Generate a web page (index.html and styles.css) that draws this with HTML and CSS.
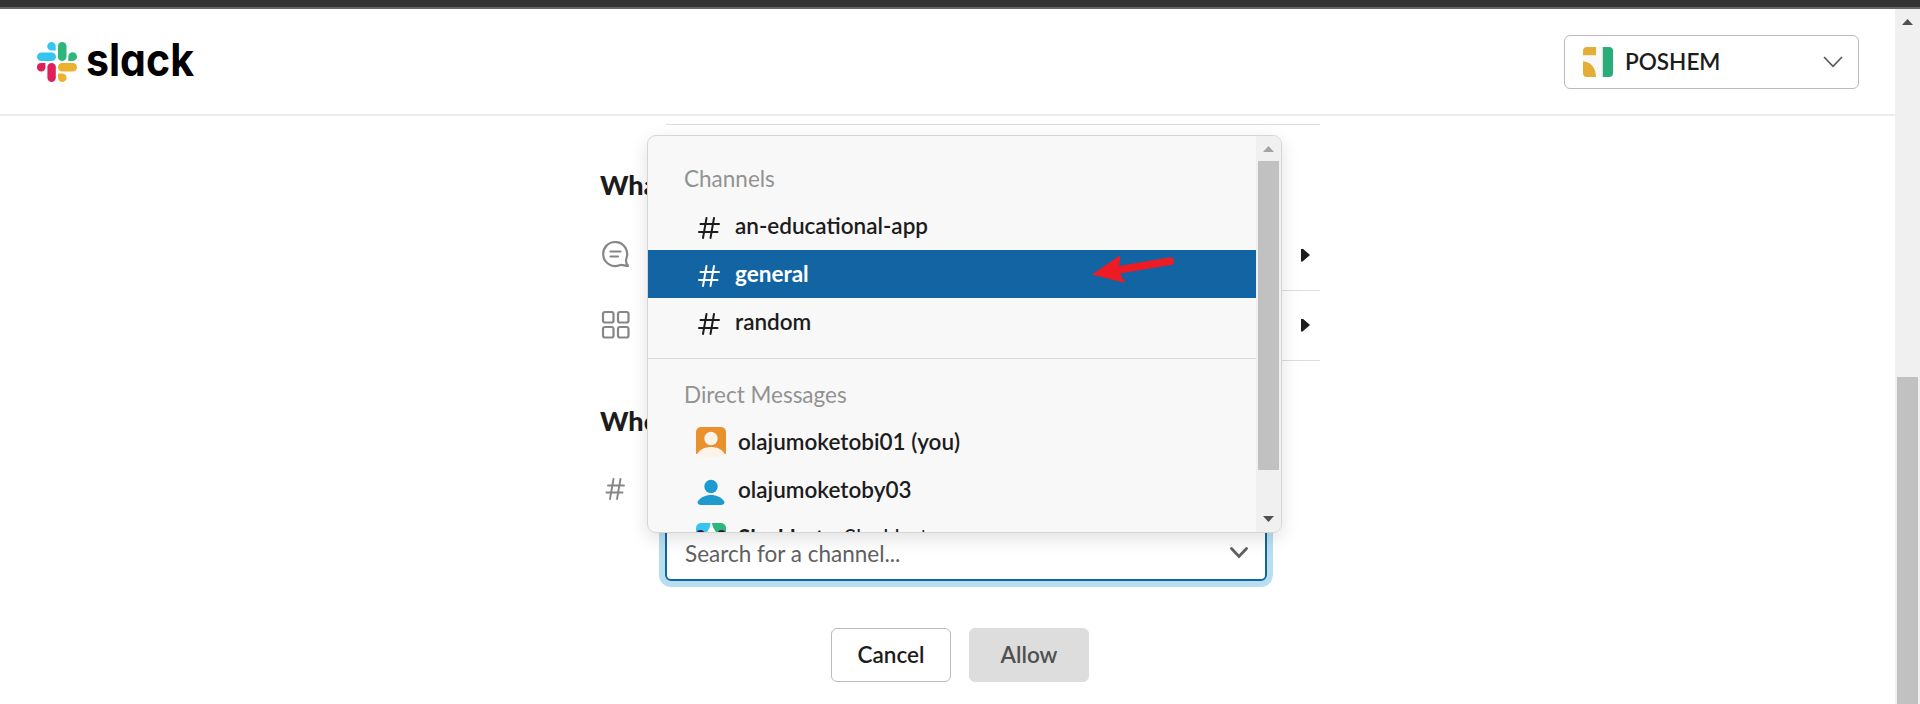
FILE: index.html
```html
<!DOCTYPE html>
<html lang="en">
<head>
<meta charset="utf-8">
<title>Slack</title>
<link rel="stylesheet" href="styles.css">
</head>
<body>
<div class="chrome"></div>
<div class="window">
  <div class="page">
    <header class="header">
      <div class="brand">
        <svg class="brand-mark" viewBox="0 0 40 40">
          <g fill="#36c5f0"><rect x="0" y="10.5" width="19" height="8.6" rx="4.3"/><path d="M14.5 0a4.2 4.2 0 0 1 4.2 4.2v4.3h-4.2a4.25 4.25 0 0 1 0-8.5z"/></g>
          <g fill="#2eb67d"><rect x="20.9" y="0" width="8.6" height="19" rx="4.3"/><path d="M40 14.5a4.2 4.2 0 0 1-4.2 4.4h-4.5v-4.4a4.35 4.35 0 0 1 8.7 0z"/></g>
          <g fill="#ecb22e"><rect x="21" y="21" width="19" height="8.5" rx="4.25"/><path d="M25.3 40a4.3 4.3 0 0 1-4.3-4.3v-4.3h4.3a4.3 4.3 0 0 1 0 8.6z"/></g>
          <g fill="#e01e5a"><rect x="10.4" y="21" width="8.4" height="19" rx="4.2"/><path d="M0 25.3A4.3 4.3 0 0 0 4.2 29.5a4.3 4.3 0 0 0 4.2-4.2V21H4.2A4.3 4.3 0 0 0 0 25.3z"/></g>
        </svg>
        <svg class="wordmark" viewBox="0 0 112 56"><text class="wordmark-text" x="-1" y="41" textLength="108" lengthAdjust="spacingAndGlyphs">slack</text></svg>
      </div>
      <div class="workspace">
        <svg class="workspace-icon" viewBox="0 0 30 30">
          <rect width="30" height="30" rx="4" fill="#f8f8f8"/>
          <path d="M4 0h9v8.3H0V4a4 4 0 0 1 4-4zM0 14.5c8 0 13 6.500 13 15.500H4a4 4 0 0 1-4-4z" fill="#e3ae34"/>
          <path d="M20 0h6a4 4 0 0 1 4 4v22a4 4 0 0 1-4 4h-6z" fill="#29ad78"/>
          <path d="M19.300 0v30" stroke="#ddd" stroke-width="1"/>
        </svg>
        <span class="workspace-name">POSHEM</span>
        <svg class="workspace-caret" viewBox="0 0 20 12"><path d="M1 1l9 9.300L19 1" fill="none" stroke="#555" stroke-width="1.600"/></svg>
      </div>
    </header>
    <main class="content">
      <div class="rule"></div>
      <h2 class="heading">What</h2>
      <div class="row">
        <svg class="row-icon" viewBox="0 0 30 30" fill="none" stroke="#868686" stroke-width="2.200" stroke-linecap="round" stroke-linejoin="round"><path d="M25.500 18A12 12 0 1 0 18.500 25.200C21 24.300 23.500 25.800 27 26 25 23.500 24.500 21 25.500 18z"/><path d="M9.500 11.500h10M9.500 16.500h7.500"/></svg>
        <span class="triangle"></span>
      </div>
      <div class="row">
        <svg class="row-icon" viewBox="0 0 30 30" fill="none" stroke="#868686" stroke-width="2.200"><rect x="2" y="2" width="10.500" height="10.500" rx="2"/><rect x="17" y="2" width="10.500" height="10.500" rx="2"/><rect x="2" y="17" width="10.500" height="10.500" rx="2"/><rect x="17" y="17" width="10.500" height="10.500" rx="2"/></svg>
        <span class="triangle"></span>
      </div>
      <h2 class="heading heading-second">Where</h2>
      <div class="post">
        <svg class="post-hash" viewBox="0 0 22 22" fill="none" stroke="#868686" stroke-width="1.900" stroke-linecap="round"><path d="M9.500 1L6 21M16.500 1L13 21M4 7.500h16M2.500 14.500h16"/></svg>
        <div class="search">
          <span class="search-text">Search for a channel...</span>
          <svg class="search-caret" viewBox="0 0 18 12"><path d="M1.500 1.500L9 9.500l7.500-8" fill="none" stroke="#616061" stroke-width="2.800" stroke-linecap="round"/></svg>
        </div>
      </div>
      <div class="actions">
        <button class="button">Cancel</button>
        <button class="button button-disabled">Allow</button>
      </div>
    </main>
  </div>
  <div class="page-scroll"><span class="scroll-up"></span><span class="page-thumb"></span></div>
</div>

<div class="menu">
  <div class="menu-list">
    <div class="group-label">Channels</div>
    <div class="option"><svg class="hash" viewBox="0 0 22 22"><path d="M8.500 1L5 21M16 1L12.500 21M2.500 7h18.500M1 15h18.500"/></svg><span>an-educational-app</span></div>
    <div class="option option-active"><svg class="hash" viewBox="0 0 22 22"><path d="M8.500 1L5 21M16 1L12.500 21M2.500 7h18.500M1 15h18.500"/></svg><span>general</span></div>
    <div class="option"><svg class="hash" viewBox="0 0 22 22"><path d="M8.500 1L5 21M16 1L12.500 21M2.500 7h18.500M1 15h18.500"/></svg><span>random</span></div>
    <div class="divider"></div>
    <div class="group-label">Direct Messages</div>
    <div class="option"><svg class="avatar" viewBox="0 0 30 30"><path d="M5 0h20a5 5 0 0 1 5 5v22H0V5a5 5 0 0 1 5-5z" fill="#e8912d"/><circle cx="15" cy="11.500" r="6.700" fill="#fdf3e8"/><path d="M1.500 26.500C4.500 22 9.500 20 15 20s10.500 2 13.500 6.500c0 2-1.500 3.500-3.500 3.500H5c-2 0-3.500-1.500-3.500-3.500z" fill="#fdf3e8"/></svg><span>olajumoketobi01 (you)</span></div>
    <div class="option"><svg class="avatar" viewBox="0 0 30 30"><g fill="#1d9bd1"><circle cx="15" cy="11.500" r="6.700"/><path d="M1.500 27C4.500 22 9.500 20 15 20s10.500 2 13.500 7c0 1.800-1.500 3-3.500 3H5c-2 0-3.500-1.200-3.500-3z"/></g></svg><span>olajumoketoby03</span></div>
    <div class="option"><svg class="avatar" viewBox="0 0 30 30"><rect width="30" height="30" rx="5" fill="#fff"/><path d="M5 0h9.500C14.500 4 12.500 7 11 9H0V5a5 5 0 0 1 5-5z" fill="#36c5f0"/><path d="M16 0h9a5 5 0 0 1 5 5v4H20C18 6.500 16.500 4 16 0z" fill="#2eb67d"/><circle cx="4.500" cy="11" r="4" fill="#3b1140"/><circle cx="25.500" cy="11" r="4" fill="#3b1140"/></svg><span class="bot"><b>Slackbot</b><i class="presence"></i><span class="bot-name">Slackbot</span></span></div>
  </div>
  <div class="menu-scroll"><span class="scroll-up scroll-muted"></span><span class="menu-thumb"></span><span class="scroll-down"></span></div>
</div>
<svg class="pointer" viewBox="0 0 86 30"><path d="M0 19.500L28.500 0 27 11 78 2.200A4 4 0 0 1 80 9.700L28 18.500 33.500 28z" fill="#ed1c24"/></svg>
</body>
</html>
```
FILE: styles.css
```css
* { box-sizing: border-box; }
body {
  margin: 0;
  height: 704px;
  overflow: hidden;
  position: relative;
  background: #fff;
  color: #1d1c1d;
  font-family: Lato, sans-serif;
  font-size: 22.5px;
}
.chrome { height: 9px; background: #333; border-bottom: 2px solid #666; }
.window { display: flex; height: 695px; }
.page { flex: 1; }
.page-scroll {
  width: 25px;
  background: #f0f0f0;
  display: flex;
  flex-direction: column;
  align-items: center;
  padding-top: 10px;
}
.scroll-up {
  width: 11px; height: 6px;
  background: #505050;
  clip-path: polygon(50% 0, 100% 100%, 0 100%);
}
.scroll-muted { background: #a3a3a3; }
.scroll-down {
  width: 11px; height: 6px;
  background: #505050;
  clip-path: polygon(0 0, 100% 0, 50% 100%);
}
.page-thumb { width: 21px; flex: 1; margin-top: 352px; background: #c1c1c1; }

.header {
  height: 107px;
  display: flex;
  align-items: flex-start;
  justify-content: space-between;
  padding: 26px 36px 0 37px;
  border-bottom: 2px solid #ededed;
}
.brand { display: flex; }
.brand-mark { width: 40px; height: 40px; margin-top: 7px; }
.wordmark { width: 112px; height: 56px; margin-left: 10px; overflow: visible; }
.wordmark-text {
  font-family: Inter, sans-serif;
  font-weight: 700;
  font-size: 45px;
  font-feature-settings: "cv11";
  fill: #000;
}
.workspace {
  width: 295px; height: 54px;
  border: 1px solid #bbb;
  border-radius: 6px;
  display: flex;
  align-items: center;
  padding: 0 15px 0 18px;
}
.workspace-icon { width: 30px; height: 30px; }
.workspace-name { flex: 1; margin-left: 12px; padding-bottom: 2px; font-weight: 600; }
.workspace-caret { width: 20px; height: 12px; }

.content { padding: 8px 575px 0 600px; }
.rule { height: 1px; margin-left: 66px; background: #ddd; }
.heading {
  margin: 42px 0 0;
  height: 36px;
  line-height: 36px;
  font-size: 27px;
  font-weight: 900;
  white-space: nowrap;
}
.row {
  height: 70px;
  display: flex;
  align-items: center;
  justify-content: space-between;
  background: linear-gradient(#ddd, #ddd) 66px 100% / 654px 1px no-repeat;
  padding: 0 10px 2px 0;
}
.heading + .row { margin-top: 18px; }
.row-icon { width: 30px; height: 30px; margin-left: 1px; }
.triangle {
  width: 9px; height: 13px;
  background: #1d1c1d;
  clip-path: polygon(0 0, 18% 0, 100% 50%, 18% 100%, 0 100%);
}
.heading-second { margin-top: 42px; }
.post { display: flex; align-items: flex-start; margin-top: 39px; }
.post-hash { width: 22px; height: 22px; margin: 0 0 0 4px; }
.search {
  width: 602px; height: 54px;
  margin: 49px 0 0 39px;
  border: 2px solid #1264a3;
  border-radius: 6px;
  box-shadow: 0 0 0 6px #b8dff0;
  display: flex;
  align-items: center;
  justify-content: space-between;
  padding: 0 17px 2px 18px;
  color: #616061;
}
.search-caret { width: 18px; height: 12px; }
.actions { display: flex; gap: 18px; margin: 47px 0 0 231px; }
.button {
  width: 120px; height: 54px;
  padding: 0 0 2px;
  border: 1px solid #bbb;
  border-radius: 6px;
  background: #fff;
  color: #1d1c1d;
  font: 600 22.5px Lato, sans-serif;
}
.button-disabled { background: #ddd; border-color: #ddd; color: #505050; }

.menu {
  position: absolute;
  left: 647px; top: 135px;
  width: 635px; height: 398px;
  display: flex;
  overflow: hidden;
  background: #f8f8f8;
  border: 1px solid #d6d6d6;
  border-radius: 9px;
  box-shadow: 0 6px 18px rgba(0, 0, 0, .12);
}
.menu-list { flex: 1; }
.group-label {
  height: 66px;
  padding: 29px 0 0 36px;
  line-height: 27px;
  font-weight: 400;
  color: #929292;
}
.divider { height: 1px; margin-top: 12px; background: #dcdcdc; }
.divider + .group-label { height: 59px; padding-top: 22px; }
.option {
  height: 48px;
  display: flex;
  align-items: center;
  padding-left: 48px;
  font-weight: 600;
  white-space: nowrap;
}
.option > span { padding-bottom: 2px; }
.hash {
  width: 22px; height: 22px;
  margin: 3px 15px 0 2px;
  fill: none;
  stroke: currentColor;
  stroke-width: 2;
  stroke-linecap: round;
}
.option-active { background: #1264a3; color: #fff; font-weight: 700; }
.avatar { width: 30px; height: 30px; margin-right: 12px; }
.bot { display: flex; align-items: center; }
.bot b { font-weight: 700; }
.presence { width: 8px; height: 8px; margin: 0 6px; border-radius: 50%; background: #2bac76; }
.bot-name { font-weight: 400; }
.menu-scroll {
  width: 25px;
  background: #f0f0f0;
  display: flex;
  flex-direction: column;
  align-items: center;
  padding: 10px 0;
}
.menu-thumb { width: 21px; height: 309px; margin: 9px 0 auto; background: #c1c1c1; }
.pointer { position: absolute; left: 1092px; top: 255px; width: 86px; height: 30px; }
```
